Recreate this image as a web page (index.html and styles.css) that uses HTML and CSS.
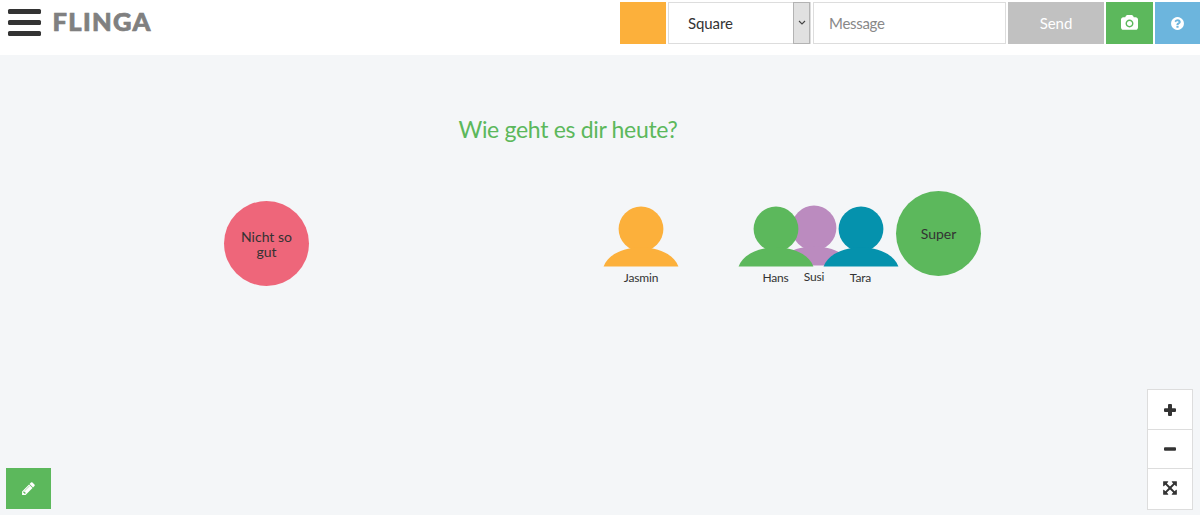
FILE: index.html
```html
<!DOCTYPE html>
<html lang="de">
<head>
<meta charset="utf-8">
<title>Flinga</title>
<link rel="stylesheet" href="styles.css">
</head>
<body>
<header class="topbar">
  <div class="brand">
    <div class="menu"><span></span><span></span><span></span></div>
    <svg class="logo" width="100" height="24" viewBox="0 0 100 24"><text x="-0.5" y="21.700" textLength="98">FLINGA</text></svg>
  </div>
  <div class="tools">
    <div class="swatch"></div>
    <div class="select"><span class="value">Square</span><span class="arrow"><svg width="8" height="6" viewBox="0 0 8 6"><path d="M1 1l3 3 3-3" fill="none" stroke="#444" stroke-width="1.1"/></svg></span></div>
    <div class="message">Message</div>
    <div class="send">Send</div>
    <div class="camera"><svg width="17" height="16" viewBox="0 0 1920 1792"><path fill="#fff" d="M960 672q119 0 203.500 84.500t84.500 203.500-84.500 203.500-203.500 84.500-203.500-84.500-84.500-203.500 84.500-203.500 203.500-84.500zm704-416q106 0 181 75t75 181v896q0 106-75 181t-181 75h-1408q-106 0-181-75t-75-181v-896q0-106 75-181t181-75h224l51-136q19-49 69.500-84.500t103.500-35.500h512q53 0 103.500 35.500t69.500 84.500l51 136h224zm-704 1152q185 0 316.500-131.500t131.500-316.500-131.500-316.500-316.500-131.500-316.500 131.500-131.500 316.500 131.500 316.500 316.500 131.500z"/></svg></div>
    <div class="help"><svg width="15" height="15" viewBox="0 0 1792 1792"><path fill="#fff" d="M1024 1376v-192q0-14-9-23t-23-9h-192q-14 0-23 9t-9 23v192q0 14 9 23t23 9h192q14 0 23-9t9-23zm256-672q0-88-55.500-163t-138.500-116-170-41q-243 0-371 213-15 24 8 42l132 100q7 6 19 6 16 0 25-12 53-68 86-92 34-24 86-24 48 0 85.500 26t37.500 59q0 38-20 61t-68 45q-63 28-115.500 86.500t-52.500 125.500v36q0 14 9 23t23 9h192q14 0 23-9t9-23q0-19 21.500-49.500t54.500-49.500q32-18 49-28.500t46-35 44.500-48 28-60.500 12.500-81zm384 192q0 209-103 385.500t-279.500 279.500-385.500 103-385.500-103-279.500-279.500-103-385.500 103-385.500 279.500-279.500 385.500-103 385.500 103 279.500 279.500 103 385.500z"/></svg></div>
  </div>
</header>
<main class="board">
  <h1 class="question">Wie geht es dir heute?</h1>
  <div class="bubble bad">Nicht so<br>gut</div>
  <div class="bubble good">Super</div>
  <div class="person susi"><svg width="76" height="62" viewBox="0 0 76 62"><circle cx="38" cy="23" r="22.400"/><path d="M.6 60.500C5 49 19 41.500 38 41.500S71 49 75.400 60.500z"/></svg><span>Susi</span></div>
  <div class="person hans"><svg width="76" height="62" viewBox="0 0 76 62"><circle cx="38" cy="23" r="22.400"/><path d="M.6 60.500C5 49 19 41.500 38 41.500S71 49 75.400 60.500z"/></svg><span>Hans</span></div>
  <div class="person tara"><svg width="76" height="62" viewBox="0 0 76 62"><circle cx="38" cy="23" r="22.400"/><path d="M.6 60.500C5 49 19 41.500 38 41.500S71 49 75.400 60.500z"/></svg><span>Tara</span></div>
  <div class="person jasmin"><svg width="76" height="62" viewBox="0 0 76 62"><circle cx="38" cy="23" r="22.400"/><path d="M.6 60.500C5 49 19 41.500 38 41.500S71 49 75.400 60.500z"/></svg><span>Jasmin</span></div>
  <div class="zoom">
    <div><svg width="12" height="12" viewBox="0 0 12 12"><path fill="#333" d="M5 0h2a1 1 0 0 1 1 1v3.300h3a1 1 0 0 1 1 1v1.600a1 1 0 0 1-1 1H8V11a1 1 0 0 1-1 1H5a1 1 0 0 1-1-1V7.900H1a1 1 0 0 1-1-1V5.300a1 1 0 0 1 1-1h3V1a1 1 0 0 1 1-1z"/></svg></div>
    <div><svg width="12" height="12" viewBox="0 0 12 12"><rect y="4.300" width="12" height="3.500" rx="1" fill="#333"/></svg></div>
    <div><svg width="16" height="16" viewBox="0 0 1792 1792"><path fill="#333" d="M1411 541l-355 355 355 355 144-144q29-31 70-14 39 17 39 59v448q0 26-19 45t-45 19h-448q-42 0-59-40-17-39 14-69l144-144-355-355-355 355 144 144q31 30 14 69-17 40-59 40h-448q-26 0-45-19t-19-45v-448q0-42 40-59 39-17 69 14l144 144 355-355-355-355-144 144q-19 19-45 19-12 0-24-5-40-17-40-59v-448q0-26 19-45t45-19h448q42 0 59 40 17 39-14 69l-144 144 355 355 355-355-144-144q-31-30-14-69 17-40 59-40h448q26 0 45 19t19 45v448q0 42-39 59-13 5-25 5-26 0-45-19z"/></svg></div>
  </div>
  <div class="edit"><svg width="15" height="15" viewBox="0 0 1792 1792"><path fill="#fff" d="M491 1536l91-91-235-235-91 91v107h128v128h107zm523-928q0-22-22-22-10 0-17 7l-542 542q-7 7-7 17 0 22 22 22 10 0 17-7l542-542q7-7 7-17zm-54-192l416 416-832 832h-416v-416zm683 96q0 53-37 90l-166 166-416-416 166-165q36-38 90-38 53 0 91 38l235 234q37 39 37 91z"/></svg></div>
</main>
</body>
</html>
```
FILE: styles.css
```css
* { box-sizing: border-box; }
body {
  margin: 0;
  height: 515px;
  overflow: hidden;
  display: flex;
  flex-direction: column;
  font-family: Lato, "Liberation Sans", sans-serif;
  color: #333;
  background: #f4f6f8;
}
.topbar {
  height: 55px;
  flex: none;
  display: flex;
  justify-content: space-between;
  padding-top: 2px;
  background: #fff;
}
.brand { display: flex; padding: 7px 0 0 8px; gap: 12px; }
.menu { display: flex; flex-direction: column; gap: 6px; width: 33px; }
.menu span { height: 5px; border-radius: 1.5px; background: #333; }
.logo { overflow: visible; }
.logo text { font-size: 25.5px; font-weight: 900; fill: #808080; stroke: #808080; stroke-width: 0.7px; }
.tools { display: flex; height: 42px; font-size: 15px; letter-spacing: -0.1px; }
.tools > div { display: flex; align-items: center; }
.swatch { width: 46px; margin-right: 2px; background: #fcb03b; }
.select { width: 143px; margin-right: 2px; border: 1px solid #ddd; justify-content: space-between; }
.value { padding-left: 19px; }
.arrow {
  width: 17px;
  height: 42px;
  display: flex;
  align-items: center;
  justify-content: center;
  background: #e1e1e1;
  border: 1px solid #b3b3b3;
}
.message { width: 193px; margin-right: 2px; border: 1px solid #ddd; padding-left: 15px; color: #888; letter-spacing: -0.3px; }
.send, .camera, .help { justify-content: center; color: #fff; }
.send { width: 96px; margin-right: 2px; background: #c1c1c1; }
.camera { width: 47px; margin-right: 2px; background: #5cb85c; }
.help { width: 45px; background: #6cb5dd; }
.board { position: relative; flex: 1; }
.question {
  position: absolute;
  left: 458.5px;
  top: 60px;
  margin: 0;
  font-size: 23px;
  line-height: 28px;
  font-weight: 400;
  letter-spacing: -0.32px;
  color: #5cb85c;
  white-space: nowrap;
}
.bubble {
  position: absolute;
  width: 85px;
  height: 85px;
  border-radius: 50%;
  display: flex;
  align-items: center;
  justify-content: center;
  text-align: center;
  font-size: 14px;
  line-height: 15px;
}
.bad { left: 224px; top: 146px; background: #ee667a; }
.good { left: 896px; top: 136px; background: #5cb85c; }
.person { position: absolute; width: 76px; display: flex; flex-direction: column; align-items: center; font-size: 12px; line-height: 14px; letter-spacing: -0.15px; }
.person span { margin-top: 3px; }
.jasmin { left: 603px; top: 151px; fill: #fcb03b; }
.hans { left: 737.5px; top: 151px; fill: #5cb85c; }
.susi { left: 776px; top: 150px; fill: #bb8bbf; }
.tara { left: 822.5px; top: 151px; fill: #0592ad; }
.zoom {
  position: absolute;
  left: 1147px;
  top: 334px;
  width: 46px;
  height: 121px;
  display: grid;
  grid-template-rows: 39px 39px 41px;
  border: 1px solid #ddd;
  background: #fff;
}
.zoom div { display: flex; align-items: center; justify-content: center; }
.zoom div + div { border-top: 1px solid #ddd; }
.zoom div:last-child { padding-bottom: 2px; }
.edit {
  position: absolute;
  left: 6px;
  top: 413px;
  width: 45px;
  height: 41px;
  display: flex;
  align-items: center;
  justify-content: center;
  background: #5cb85c;
}
```
